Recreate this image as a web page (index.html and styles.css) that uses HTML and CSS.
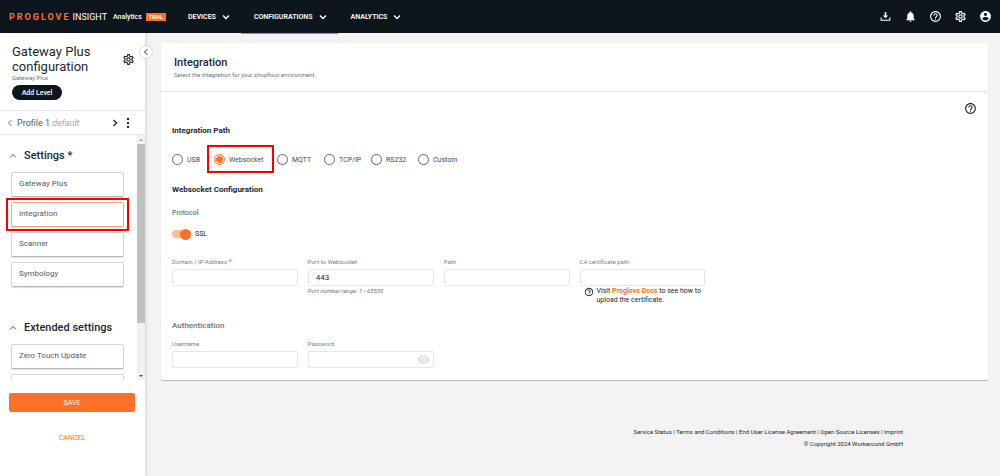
FILE: index.html
```html
<!DOCTYPE html>
<html lang="en">
<head>
<meta charset="utf-8">
<title>ProGlove Insight - Gateway Plus configuration</title>
<link rel="stylesheet" href="styles.css">
</head>
<body>
<svg class="sprite" aria-hidden="true">
  <symbol id="chev-down" viewBox="0 0 8 8"><path d="M1 2.5 4 5.5 7 2.5" fill="none" stroke="currentColor" stroke-width="1.3"/></symbol>
  <symbol id="chev-up" viewBox="0 0 8 8"><path d="M1 5.5 4 2.5 7 5.5" fill="none" stroke="currentColor"/></symbol>
  <symbol id="chev-left" viewBox="0 0 8 8"><path d="M5.5 1 2.5 4 5.5 7" fill="none" stroke="currentColor"/></symbol>
  <symbol id="chev-right" viewBox="0 0 8 8"><path d="M2.5 1 5.5 4 2.5 7" fill="none" stroke="currentColor" stroke-width="1.4"/></symbol>
  <symbol id="help" viewBox="0 0 24 24"><path fill="currentColor" d="M11 18h2v-2h-2v2zm1-16C6.480 2 2 6.480 2 12s4.480 10 10 10 10-4.480 10-10S17.520 2 12 2zm0 18c-4.410 0-8-3.590-8-8s3.590-8 8-8 8 3.590 8 8-3.590 8-8 8zm0-14c-2.210 0-4 1.790-4 4h2c0-1.100.9-2 2-2s2 .9 2 2c0 2-3 1.750-3 5h2c0-2.250 3-2.500 3-5 0-2.210-1.790-4-4-4z"/></symbol>
  <symbol id="gear" viewBox="0 0 24 24"><path fill="currentColor" d="M19.430 12.980c.04-.32.07-.64.07-.98s-.03-.66-.07-.98l2.110-1.650c.19-.15.24-.42.12-.64l-2-3.460c-.09-.16-.26-.25-.44-.25-.06 0-.12.010-.17.030l-2.490 1c-.52-.4-1.080-.73-1.690-.98l-.38-2.650C14.460 2.180 14.250 2 14 2h-4c-.25 0-.46.18-.49.42l-.38 2.650c-.61.25-1.170.59-1.690.98l-2.490-1c-.06-.02-.12-.03-.18-.03-.17 0-.34.09-.43.25l-2 3.460c-.13.22-.07.49.12.64l2.110 1.650c-.04.32-.07.65-.07.98s.03.66.07.98l-2.110 1.650c-.19.15-.24.42-.12.64l2 3.460c.09.16.26.25.44.25.06 0 .12-.01.17-.03l2.490-1c.52.4 1.080.73 1.690.98l.38 2.650c.03.24.24.42.49.42h4c.25 0 .46-.18.49-.42l.38-2.650c.61-.25 1.170-.59 1.690-.98l2.490 1c.06.02.12.03.18.03.17 0 .34-.09.43-.25l2-3.460c.12-.22.07-.49-.12-.64l-2.110-1.650zm-1.980-1.710c.04.31.05.52.05.73s-.02.43-.05.73l-.14 1.130.89.7 1.080.84-.7 1.210-1.270-.51-1.040-.42-.9.68c-.43.32-.84.56-1.250.73l-1.060.43-.16 1.130-.2 1.350h-1.400l-.19-1.350-.16-1.130-1.060-.43c-.43-.18-.83-.41-1.230-.71l-.91-.7-1.060.43-1.270.51-.7-1.210 1.080-.84.89-.7-.14-1.130c-.03-.31-.05-.54-.05-.74s.02-.43.05-.73l.14-1.130-.89-.7-1.080-.84.7-1.210 1.270.51 1.040.42.9-.68c.43-.32.84-.56 1.250-.73l1.060-.43.16-1.130.2-1.350h1.390l.19 1.350.16 1.130 1.060.43c.43.18.83.41 1.230.71l.91.7 1.060-.43 1.270-.51.7 1.210-1.070.85-.89.7.14 1.130zM12 8c-2.210 0-4 1.790-4 4s1.790 4 4 4 4-1.790 4-4-1.790-4-4-4zm0 6c-1.100 0-2-.9-2-2s.9-2 2-2 2 .9 2 2-.9 2-2 2z"/></symbol>
  <symbol id="download" viewBox="0 0 24 24"><path d="M12 4v8" fill="none" stroke="currentColor" stroke-width="3"/><path d="M7 10h10l-5 5zM3 14h2v4h14v-4h2v6H3z" fill="currentColor"/></symbol>
  <symbol id="bell" viewBox="0 0 24 24"><path fill="currentColor" d="M12 22c1.100 0 2-.9 2-2h-4c0 1.100.9 2 2 2zm6-6v-5c0-3.070-1.630-5.640-4.500-6.320V4c0-.83-.67-1.500-1.500-1.500s-1.500.67-1.500 1.500v.68C7.640 5.360 6 7.920 6 11v5l-2 2v1h16v-1l-2-2z"/></symbol>
  <symbol id="user" viewBox="0 0 24 24"><path fill="currentColor" d="M12 2C6.480 2 2 6.480 2 12s4.480 10 10 10 10-4.480 10-10S17.520 2 12 2zm0 3c1.660 0 3 1.340 3 3s-1.340 3-3 3-3-1.340-3-3 1.340-3 3-3zm0 14.200c-2.500 0-4.710-1.280-6-3.220.03-1.990 4-3.080 6-3.080 1.990 0 5.970 1.090 6 3.080-1.290 1.940-3.500 3.220-6 3.220z"/></symbol>
  <symbol id="eye" viewBox="0 0 24 24"><path fill="currentColor" d="M12 4.500C7 4.500 2.730 7.610 1 12c1.730 4.390 6 7.500 11 7.500s9.270-3.110 11-7.500c-1.730-4.390-6-7.500-11-7.500zM12 17c-2.760 0-5-2.240-5-5s2.240-5 5-5 5 2.240 5 5-2.240 5-5 5zm0-8c-1.660 0-3 1.340-3 3s1.340 3 3 3 3-1.340 3-3-1.340-3-3-3z"/></symbol>
  <symbol id="dots" viewBox="0 0 4 10"><path fill="currentColor" d="M1 0h2v2H1zM1 4h2v2H1zM1 8h2v2H1z"/></symbol>
</svg>

<header class="topbar">
  <div class="brand">
    <span class="brand-name">PROGLOVE</span>
    <span class="brand-product">INSIGHT</span>
    <span class="brand-plan">Analytics</span>
    <span class="trial">TRIAL</span>
  </div>
  <nav class="menu">
    <button type="button" class="menu-item">DEVICES <svg class="icon-s"><use href="#chev-down"/></svg></button>
    <button type="button" class="menu-item active">CONFIGURATIONS <svg class="icon-s"><use href="#chev-down"/></svg></button>
    <button type="button" class="menu-item">ANALYTICS <svg class="icon-s"><use href="#chev-down"/></svg></button>
  </nav>
  <div class="tools">
    <button type="button" aria-label="Downloads"><svg class="icon"><use href="#download"/></svg></button>
    <button type="button" aria-label="Notifications"><svg class="icon"><use href="#bell"/></svg></button>
    <button type="button" aria-label="Help"><svg class="icon"><use href="#help"/></svg></button>
    <button type="button" aria-label="Settings"><svg class="icon"><use href="#gear"/></svg></button>
    <button type="button" aria-label="Account"><svg class="icon"><use href="#user"/></svg></button>
  </div>
</header>

<div class="layout">
  <aside class="sidebar">
    <button type="button" class="collapse" aria-label="Collapse sidebar"><svg class="icon-s"><use href="#chev-left"/></svg></button>
    <div class="side-head">
      <div class="side-title">
        <h1>Gateway Plus configuration</h1>
        <button type="button" aria-label="Configuration settings"><svg class="icon"><use href="#gear"/></svg></button>
      </div>
      <p class="side-sub">Gateway Plus</p>
      <button type="button" class="add-level">Add Level</button>
    </div>
    <div class="profile">
      <button type="button" class="dim" aria-label="Previous profile"><svg class="icon-s"><use href="#chev-left"/></svg></button>
      <span class="profile-name">Profile 1 <em>default</em></span>
      <button type="button" aria-label="Next profile"><svg class="icon-s"><use href="#chev-right"/></svg></button>
      <button type="button" aria-label="Profile menu"><svg class="icon-dots"><use href="#dots"/></svg></button>
    </div>
    <div class="scroller">
      <div class="groups">
        <section class="group">
          <h2><svg class="icon-s"><use href="#chev-up"/></svg>Settings *</h2>
          <button type="button" class="entry">Gateway Plus</button>
          <div class="marked"><button type="button" class="entry current">Integration</button></div>
          <button type="button" class="entry">Scanner</button>
          <button type="button" class="entry">Symbology</button>
        </section>
        <section class="group">
          <h2><svg class="icon-s"><use href="#chev-up"/></svg>Extended settings</h2>
          <button type="button" class="entry">Zero Touch Update</button>
          <button type="button" class="entry" aria-label="More settings"></button>
        </section>
      </div>
      <div class="track" aria-hidden="true">
        <span class="arrow up"></span><span class="thumb"></span><span class="rest"></span><span class="arrow down"></span>
      </div>
    </div>
    <div class="actions">
      <button type="button" class="save">SAVE</button>
      <button type="button" class="cancel">CANCEL</button>
    </div>
  </aside>

  <main class="content">
    <form class="card">
      <div class="card-head">
        <h2>Integration</h2>
        <p>Select the integration for your shopfloor environment.</p>
      </div>
      <div class="card-body">
        <div class="help-row"><button type="button" aria-label="Help"><svg class="icon"><use href="#help"/></svg></button></div>
        <h3>Integration Path</h3>
        <div class="radios" role="radiogroup" aria-label="Integration Path">
          <label><input type="radio" name="path">USB</label>
          <label class="marked"><input type="radio" name="path" checked>Websocket</label>
          <label><input type="radio" name="path">MQTT</label>
          <label><input type="radio" name="path">TCP/IP</label>
          <label><input type="radio" name="path">RS232</label>
          <label><input type="radio" name="path">Custom</label>
        </div>
        <h3>Websocket Configuration</h3>
        <h4>Protocol</h4>
        <label class="switch"><input type="checkbox" checked>SSL</label>
        <div class="fields">
          <div class="field">
            <label for="domain">Domain / IP Address <span class="req">*</span></label>
            <input id="domain" type="text">
          </div>
          <div class="field">
            <label for="port">Port to Websocket</label>
            <input id="port" type="text" value="443">
            <p class="hint">Port number range: 1 - 65535</p>
          </div>
          <div class="field">
            <label for="urlpath">Path</label>
            <input id="urlpath" type="text">
          </div>
          <div class="field">
            <label for="ca">CA certificate path</label>
            <input id="ca" type="text">
            <div class="note"><svg class="icon-note"><use href="#help"/></svg><p>Visit <a href="#docs">Proglove Docs</a> to see how to upload the certificate.</p></div>
          </div>
        </div>
        <h4 class="auth">Authentication</h4>
        <div class="fields">
          <div class="field">
            <label for="user-name">Username</label>
            <input id="user-name" type="text">
          </div>
          <div class="field">
            <label for="pass">Password</label>
            <div class="pass">
              <input id="pass" type="password">
              <button type="button" aria-label="Show password"><svg class="icon"><use href="#eye"/></svg></button>
            </div>
          </div>
        </div>
      </div>
    </form>
    <footer class="footer">
      <p><a href="#status">Service Status</a> | <a href="#terms">Terms and Conditions</a> | <a href="#eula">End User License Agreement</a> | <a href="#oss">Open Source Licenses</a> | <a href="#imprint">Imprint</a></p>
      <p>© Copyright 2024 Workaround GmbH</p>
    </footer>
  </main>
</div>
</body>
</html>
```
FILE: styles.css
```css
:root {
  --dark: #0e161d;
  --ink: #1d2830;
  --grey: #6b747b;
  --orange: #ff7029;
  --line: #e6e6e6;
  --mark: #f60000;
}
* { box-sizing: border-box; }
body {
  margin: 0;
  min-height: 100vh;
  display: flex;
  flex-direction: column;
  background: #f3f3f3;
  color: var(--ink);
  font: 7px/10px Roboto, "Liberation Sans", sans-serif;
}
h1, h2, h3, h4, p { margin: 0; font-weight: 500; }
p { font-weight: 400; }
button, input { font: inherit; color: inherit; margin: 0; }
button { display: flex; align-items: center; padding: 0; border: 0; background: none; cursor: pointer; }
a { color: inherit; text-decoration: none; }
svg { display: block; flex: none; }
.sprite { position: absolute; width: 0; height: 0; }
.icon { width: 13px; height: 13px; }
.icon-s { width: 8px; height: 8px; }
.icon-dots { width: 4px; height: 10px; }
.icon-note { width: 10px; height: 10px; }

/* Top bar */
.topbar { position: relative; z-index: 1; display: flex; height: 33px; background: var(--dark); color: #fff; }
.brand { display: flex; align-items: center; width: 175px; padding-left: 9px; white-space: nowrap; }
.brand-name { color: var(--orange); font-size: 9px; font-weight: 700; letter-spacing: 2px; }
.brand-product { margin-left: 2px; font-size: 9px; font-weight: 400; }
.brand-plan { margin-left: 6px; font-weight: 500; }
.trial { margin-left: 4px; padding: 0 3px; background: var(--orange); font-size: 5px; line-height: 8px; font-weight: 700; }
.menu { display: flex; }
.menu-item { gap: 6px; padding: 0 11px 0 13px; font-weight: 600; }
.menu-item.active { box-shadow: 0 1px var(--orange); }
.tools { display: flex; gap: 12px; margin-left: auto; padding-right: 8px; }

/* Sidebar */
.layout { display: flex; flex: 1; }
.sidebar {
  position: relative;
  display: flex;
  flex-direction: column;
  width: 146px;
  flex: none;
  background: #fff;
  border-right: 1px solid #dedede;
  box-shadow: 1px 0 2px #e2e2e2;
}
.collapse {
  position: absolute;
  top: 13px;
  right: -7px;
  width: 12px;
  height: 12px;
  justify-content: center;
  border-radius: 50%;
  background: #fff;
  box-shadow: 0 0 2px #aaa;
}
.side-head { padding: 11px 10px 10px 12px; border-bottom: 1px solid var(--line); }
.side-title { display: flex; align-items: center; justify-content: space-between; }
.side-title h1 { width: 90px; font-size: 13px; line-height: 15px; font-weight: 400; }
.side-sub { color: var(--grey); font-size: 6px; line-height: 8px; }
.add-level {
  justify-content: center;
  width: 50px;
  height: 15px;
  margin-top: 3px;
  border-radius: 8px;
  background: var(--dark);
  color: #fff;
  font-size: 7px;
  font-weight: 500;
}
.profile { display: flex; align-items: center; gap: 7px; height: 24px; padding: 0 15px 0 6px; border-bottom: 1px solid var(--line); }
.profile-name { flex: 1; margin-left: -4px; color: #555e65; font-size: 9px; }
.profile em { color: #a4a9ad; }
.dim { color: #777; }
.scroller { display: flex; height: 245px; overflow: hidden; }
.groups { flex: 1; padding: 13px 13px 0 11px; }
.group { display: flex; flex-direction: column; gap: 5px; margin-bottom: 33px; }
.group h2 { display: flex; align-items: center; gap: 7px; margin: 0 0 4px -2px; font-size: 11px; line-height: 15px; white-space: nowrap; }
.group .icon-s { color: #555e65; }
.entry {
  width: 100%;
  height: 25px;
  flex: none;
  padding: 0 7px 2px;
  border: 1px solid #d5d5d5;
  border-bottom-color: #b5b5b5;
  border-radius: 2px;
  background: #fff;
  box-shadow: 0 1px 1px #ddd;
  color: #555e65;
  font-size: 8px;
}
.entry.current { border-color: #f7a27a; }
.marked { position: relative; }
.marked::after { content: ""; position: absolute; inset: -4px -5px; border: 2px solid var(--mark); pointer-events: none; }
.track { display: flex; flex-direction: column; width: 8px; background: #f1f1f1; }
.arrow { display: grid; place-items: center; height: 9px; }
.arrow::before { content: ""; border: 2px solid transparent; }
.arrow.up::before { border-top: 0; border-bottom-color: #999; }
.arrow.down::before { border-bottom: 0; border-top-color: #444; }
.thumb { flex: 179; background: #c1c1c1; }
.rest { flex: 48; }
.actions { display: flex; flex-direction: column; gap: 16px; padding: 13px 10px 0 9px; }
.actions button { justify-content: center; height: 19px; border-radius: 2px; }
.save { background: var(--orange); color: #fff; }
.cancel { color: var(--orange); }

/* Main card */
.content { flex: 1; min-width: 0; padding: 10px 12px 0 15px; }
.card { display: block; border-radius: 2px; background: #fff; box-shadow: 0 1px 1px #b5b5b5; }
.card-head { height: 49px; padding: 12px 13px 0; border-bottom: 1px solid var(--line); }
.card-head h2 { font-size: 11px; line-height: 15px; }
.card-head p { color: var(--grey); font-size: 6px; }
.card-body { padding: 10px 11px 12px; }
.help-row { display: flex; justify-content: flex-end; }
h3 { margin-top: 10px; font-size: 8px; line-height: 12px; font-weight: 700; }
h4 { margin-top: 12px; color: var(--grey); }
.radios { display: grid; grid-template-columns: 42px 63px 47px 47px 47px auto; justify-content: start; margin: 16px 0 18px; }
.radios label { display: flex; align-items: center; gap: 4px; height: 13px; color: #444d54; white-space: nowrap; }
.radios .marked::after { inset: -8px 3px -7px -7px; }
.radios input { appearance: none; width: 11px; height: 11px; border: 1px solid #666; border-radius: 50%; }
.radios input:checked { border-color: var(--orange); background: radial-gradient(circle, var(--orange) 3px, transparent 4px); }
.switch { display: flex; align-items: center; gap: 4px; margin: 10px 0 17px; line-height: 12px; }
.switch input {
  appearance: none;
  display: flex;
  align-items: center;
  justify-content: flex-end;
  width: 19px;
  height: 8px;
  border-radius: 4px;
  background: #ffbd92;
}
.switch input::before { content: ""; width: 11px; height: 11px; flex: none; border-radius: 50%; background: var(--orange); }
.fields { display: grid; grid-template-columns: repeat(6, minmax(0, 1fr)); gap: 10px; }
.field > label { display: block; margin-bottom: 2px; color: #7a8288; font-size: 6px; }
.req { color: var(--orange); font-size: 8px; line-height: 8px; }
.field input { display: block; width: 100%; height: 17px; padding: 0 7px; border: 1px solid var(--line); border-radius: 2px; background: #fff; font-size: 8px; }
.hint { color: var(--grey); font-size: 6px; line-height: 9px; font-style: italic; }
.note { display: flex; gap: 3px; padding: 1px 0 0 4px; margin-right: -4px; }
.note p { font-size: 7px; line-height: 9px; }
.note a { color: var(--orange); font-weight: 700; }
.auth { margin: 16px 0 8px; font-size: 8px; }
.pass { position: relative; }
.pass button { position: absolute; right: 4px; top: 2px; color: #ddd; }

.footer { padding: 46px 85px 0 0; text-align: right; font-size: 6px; }
.footer p { line-height: 12px; }
```
